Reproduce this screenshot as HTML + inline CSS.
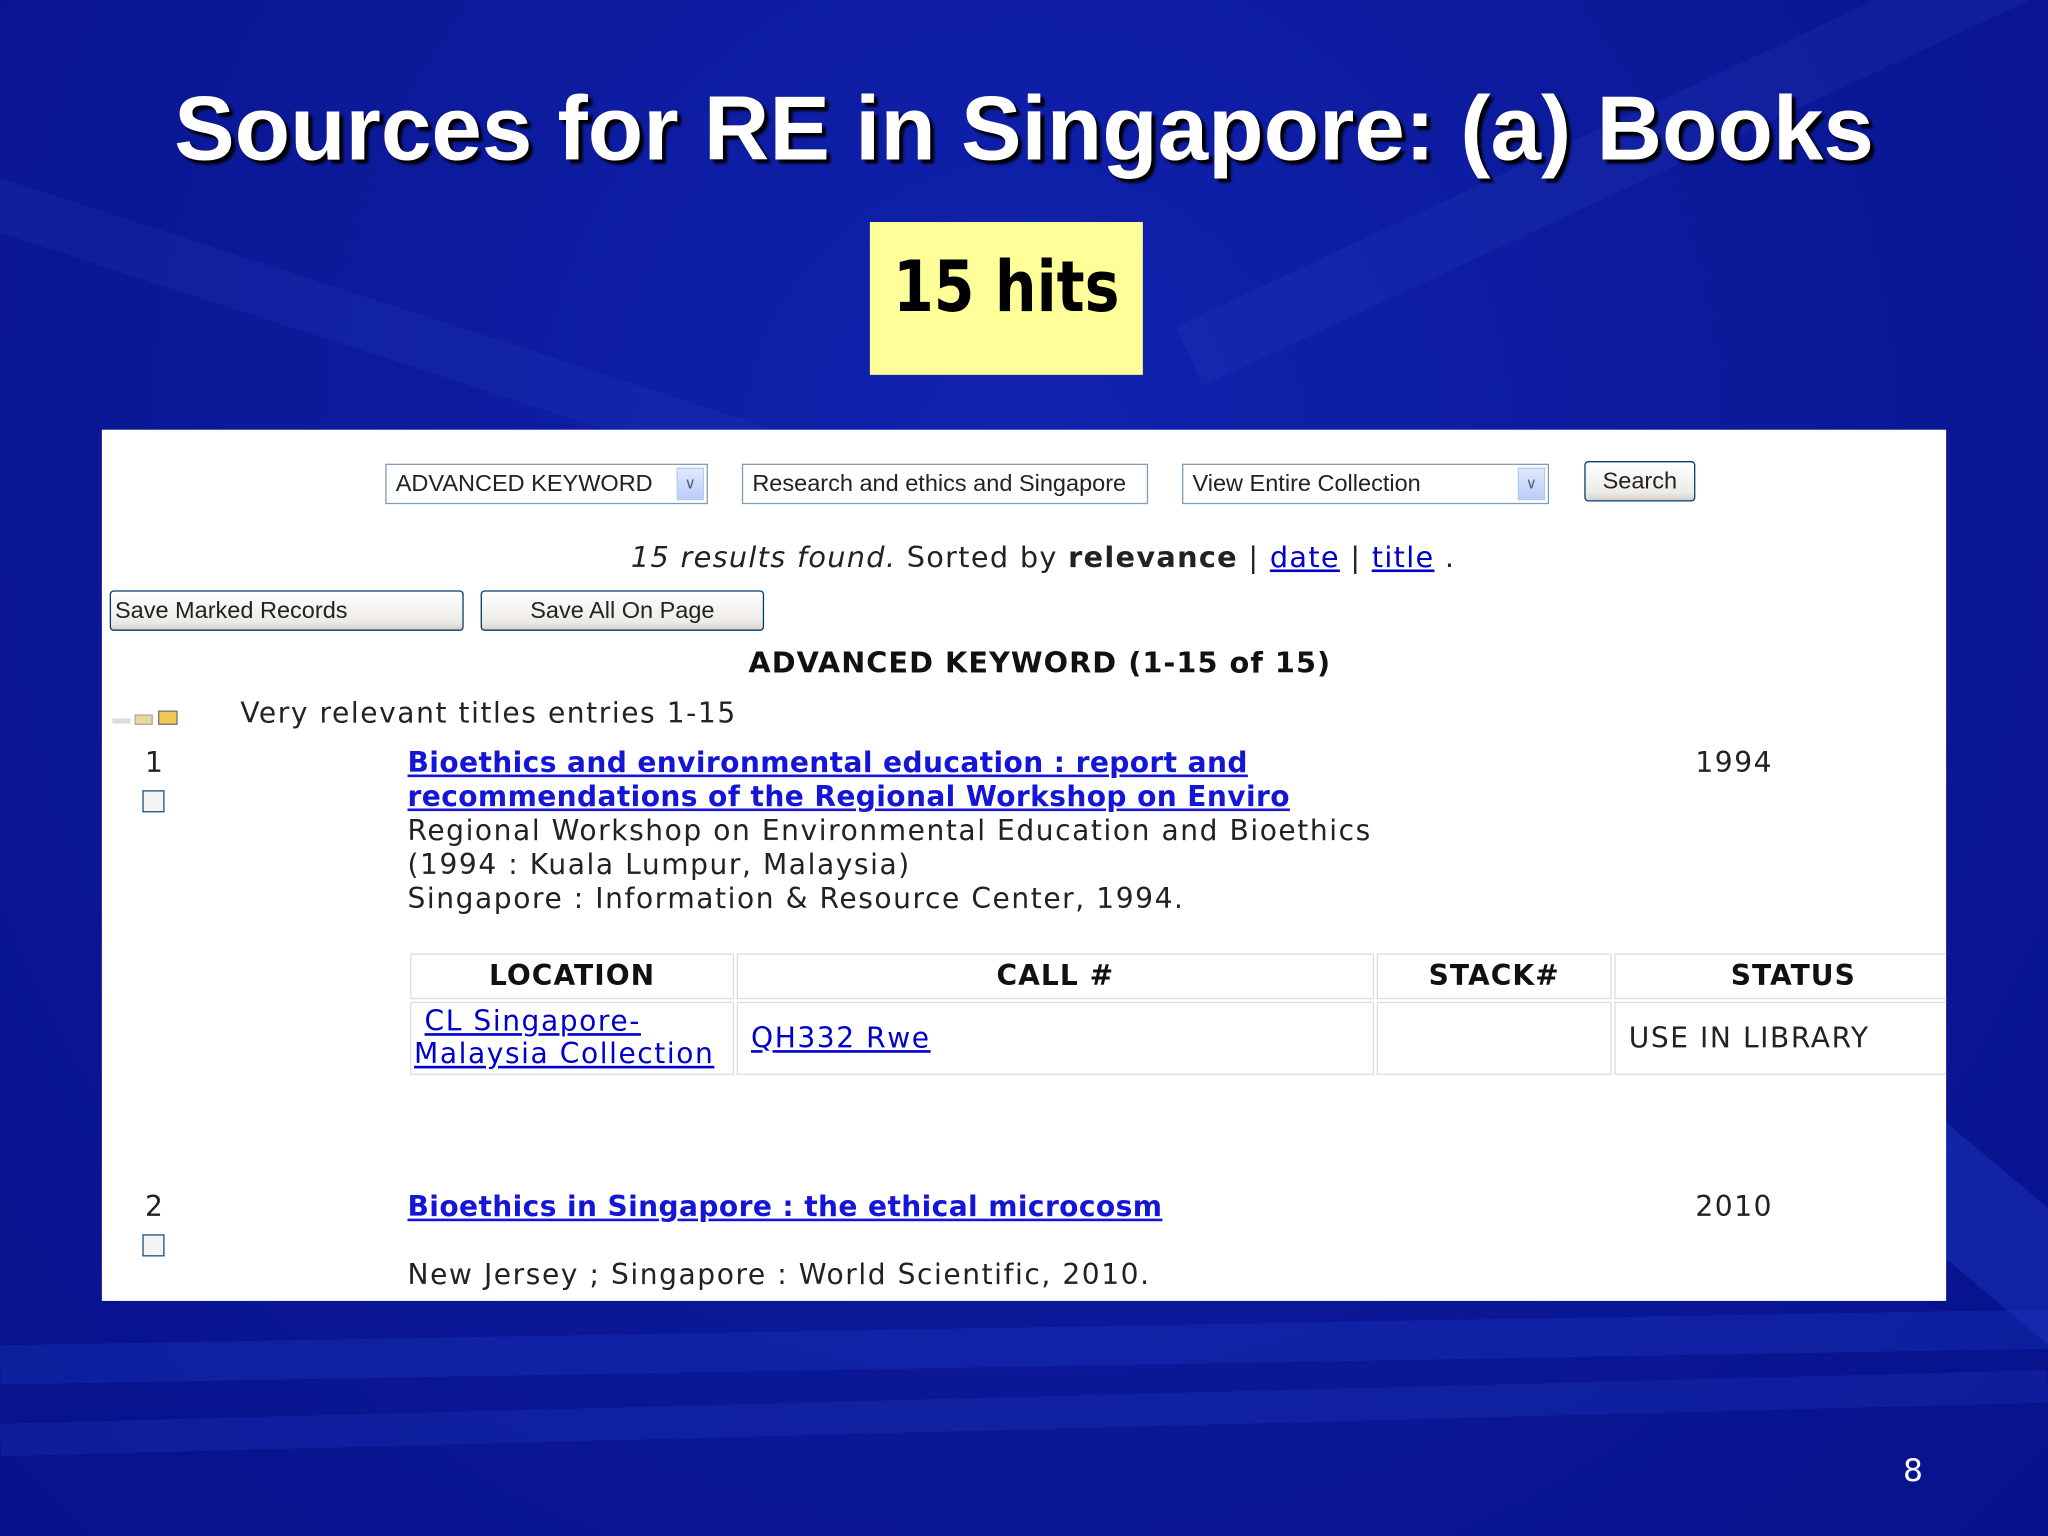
<!DOCTYPE html>
<html><head><meta charset="utf-8"><style>
html,body{margin:0;padding:0;width:2048px;height:1536px;overflow:hidden}
body{background:#0b1a9c}
#s{position:absolute;left:0;top:0;width:1568px;height:1176px;transform:scale(1.306122);transform-origin:0 0;overflow:hidden;
background:radial-gradient(ellipse at 50% 30%,#1022b0 0%,#0c1a9a 50%,#07128a 100%);}
.st{position:absolute;background:rgba(80,110,230,.09);transform-origin:0 0}
.a{position:absolute;white-space:nowrap}
#t{left:0;width:1568px;text-align:center;top:58px;font:bold 69.5px "Liberation Sans",sans-serif;color:#fff;text-shadow:3px 3px 2px #000;letter-spacing:0}
#y{left:666px;top:170px;width:209px;height:117px;background:#ffff99;text-align:center;font:bold 54px "DejaVu Sans",sans-serif;line-height:100px;color:#000}
#y span{display:inline-block;transform:scaleX(0.83)}
#p{left:78px;top:329px;width:1412px;height:667px;background:#fff;overflow:hidden}
.p{position:absolute;white-space:nowrap;font-family:"DejaVu Sans",sans-serif;font-size:21.5px;color:#222;letter-spacing:1.2px}
.b{position:absolute;border:1px solid #7f9db9;background:#fff;box-sizing:border-box;font:18px "Liberation Sans",sans-serif;color:#222;padding-left:7px;line-height:29px}
.btn{position:absolute;border:1px solid #003c74;border-radius:3px;background:linear-gradient(#fff,#ecebe6 80%,#d6d0c5);box-sizing:border-box;font:18px "Liberation Sans",sans-serif;color:#222;line-height:28px;text-align:center}
.dd{position:absolute;right:2px;top:2px;width:21px;height:25px;background:linear-gradient(#e0e9fd,#b9cdf7);border:1px solid #b6c9f3;box-sizing:border-box;color:#4d6185;font-size:12px;line-height:23px;text-align:center}
a{color:#00c;text-decoration:underline}
.lk{color:#1515d8;font-weight:bold;letter-spacing:0.3px}
.cb{position:absolute;width:17px;height:17px;border:1px solid #1c5180;box-sizing:border-box;background:#f4f4f4}
td{border:1px solid #ddd;font-family:"DejaVu Sans",sans-serif;font-size:21.5px;color:#222;padding:0;letter-spacing:1.2px}
th{border:1px solid #ddd;font:bold 21.5px "DejaVu Sans",sans-serif;color:#111;height:31px;letter-spacing:0.8px}
</style></head><body><div id="s">
<div class="st" style="left:-50px;top:120px;width:900px;height:40px;transform:rotate(18deg)"></div>
<div class="st" style="left:900px;top:250px;width:800px;height:50px;transform:rotate(-25deg)"></div>
<div class="st" style="left:1300px;top:700px;width:500px;height:80px;transform:rotate(40deg);background:rgba(40,70,220,.3)"></div>
<div class="st" style="left:0;top:1030px;width:1568px;height:30px;transform:rotate(-1deg);background:rgba(30,60,200,.3)"></div>
<div class="st" style="left:0;top:1090px;width:1568px;height:25px;transform:rotate(-1.5deg);background:rgba(30,60,200,.25)"></div>
<div class="a" id="t">Sources for RE in Singapore: (a) Books</div>
<div class="a" id="y"><span>15 hits</span></div>
<div class="a" id="p">
 <div class="b" style="left:217px;top:26px;width:247px;height:31px">ADVANCED KEYWORD<div class="dd">&#8744;</div></div>
 <div class="b" style="left:490px;top:26px;width:311px;height:31px">Research and ethics and Singapore</div>
 <div class="b" style="left:827px;top:26px;width:281px;height:31px">View Entire Collection<div class="dd">&#8744;</div></div>
 <div class="btn" style="left:1135px;top:24px;width:85px;height:31px">Search</div>
 <div class="p" style="left:405px;top:86px;font-size:22px;letter-spacing:1px"><i>15 results found.</i> Sorted by <b>relevance</b> | <a href="#">date</a> | <a href="#">title</a> .</div>
 <div class="btn" style="left:6px;top:123px;width:271px;height:31px;text-align:left;padding-left:3px">Save Marked Records</div>
 <div class="btn" style="left:290px;top:123px;width:217px;height:31px">Save All On Page</div>
 <div class="p" style="left:495px;top:167px;font-weight:bold;color:#111;font-size:22px;letter-spacing:0.8px">ADVANCED KEYWORD (1-15 of 15)</div>
 <div style="position:absolute;left:8px;top:221px;width:14px;height:4px;background:#ddd"></div>
 <div style="position:absolute;left:25px;top:218px;width:14px;height:8px;background:#e8d89a;border:1px solid #aaa;box-sizing:border-box"></div>
 <div style="position:absolute;left:43px;top:215px;width:15px;height:11px;background:#f0c850;border:1px solid #777;box-sizing:border-box"></div>
 <div class="p" style="left:106px;top:205px">Very relevant titles entries 1-15</div>
 <div class="p" style="left:33px;top:243px">1</div>
 <div class="cb" style="left:31px;top:276px"></div>
 <div class="p" style="left:234px;top:243px;line-height:26px"><a class="lk" href="#">Bioethics and environmental education : report and<br>recommendations of the Regional Workshop on Enviro</a><br>Regional Workshop on Environmental Education and Bioethics<br>(1994 : Kuala Lumpur, Malaysia)<br>Singapore : Information &amp; Resource Center, 1994.</div>
 <div class="p" style="left:1220px;top:243px">1994</div>
 <table style="position:absolute;left:234px;top:399px;border-collapse:separate;border-spacing:2px;width:1200px">
  <tr><th style="width:244px">LOCATION</th><th style="width:484px">CALL #</th><th style="width:176px">STACK#</th><th>STATUS</th></tr>
  <tr style="height:56px"><td style="line-height:25px;padding-left:2px">&nbsp;<a href="#">CL Singapore-</a><br><a href="#">Malaysia Collection</a></td><td style="padding-left:10px"><a href="#">QH332 Rwe</a></td><td></td><td style="padding-left:10px">USE IN LIBRARY</td></tr>
 </table>
 <div class="p" style="left:33px;top:583px">2</div>
 <div class="cb" style="left:31px;top:616px"></div>
 <div class="p" style="left:234px;top:583px"><a class="lk" href="#">Bioethics in Singapore : the ethical microcosm</a></div>
 <div class="p" style="left:1220px;top:583px">2010</div>
 <div class="p" style="left:234px;top:635px">New Jersey ; Singapore : World Scientific, 2010.</div>
</div>
<div class="a" style="left:1457px;top:1112px;font:24px 'DejaVu Sans',sans-serif;color:#fff">8</div>
</div></body></html>
